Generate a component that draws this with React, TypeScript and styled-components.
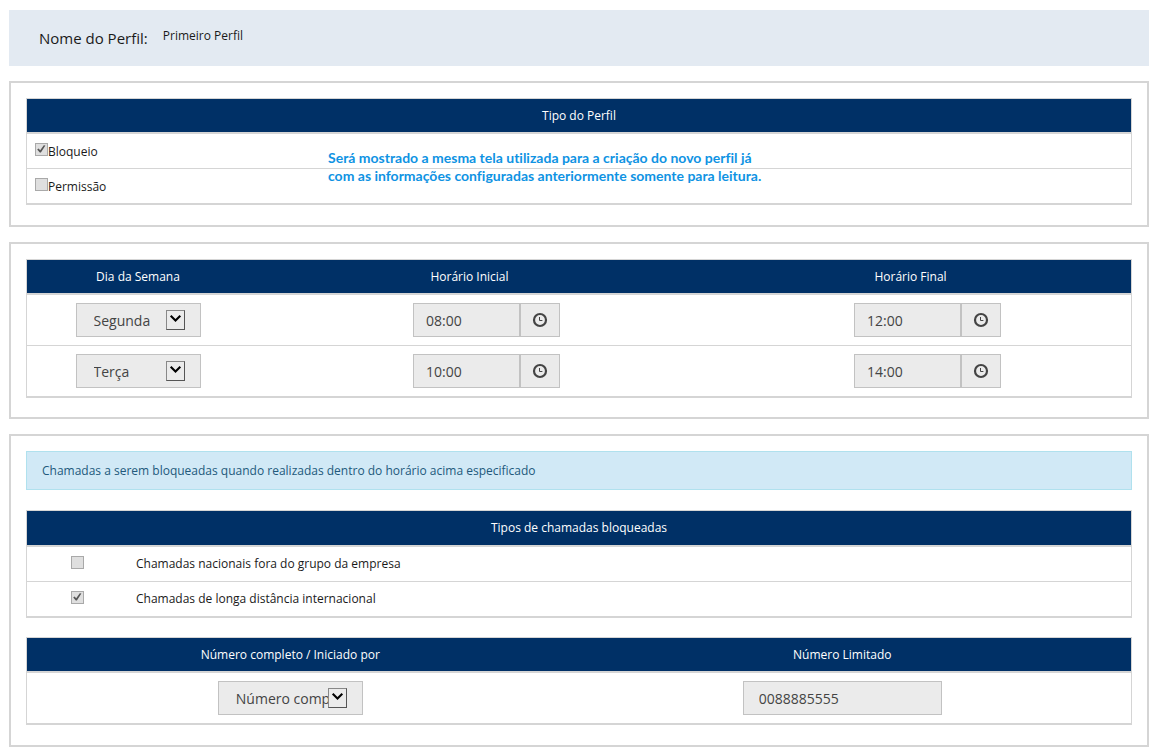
import React from "react";
import styled, { createGlobalStyle } from "styled-components";

const NAVY = "#003066";
const LINE = "#d5d5d5";

const GlobalStyle = createGlobalStyle`
  *, *::before, *::after { box-sizing: border-box; }
  body {
    margin: 0;
    background: #fff;
    color: #1a1a1a;
    font-family: "Open Sans", "Noto Sans", sans-serif;
    font-size: 12px;
    font-weight: 500;
    line-height: 18px;
  }
`;

const Page = styled.main`
  display: flex;
  flex-direction: column;
  gap: 15px;
  padding: 10px 20px 5px 9px;
`;

const ProfileBar = styled.header`
  display: flex;
  align-items: flex-start;
  gap: 15px;
  min-height: 56px;
  padding: 16px 30px;
  background: #e3eaf2;
`;

const ProfileLabel = styled.span`
  font-size: 15px;
  line-height: 24px;
`;

const ProfileName = styled.span`
  line-height: 20px;
`;

const Panel = styled.section<{ $bottom?: number }>`
  position: relative;
  padding: 15px 15px ${(p) => p.$bottom ?? 20}px;
  border: 2px solid ${LINE};
`;

const Table = styled.table`
  width: 100%;
  table-layout: fixed;
  border-collapse: separate;
  border-spacing: 0;
  border: 1px solid ${LINE};
  border-bottom-width: 2px;

  & + & {
    margin-top: 19px;
  }
`;

const Col = styled.col<{ $width?: string }>`
  width: ${(p) => p.$width ?? "auto"};
`;

const Th = styled.th<{ $height?: number }>`
  height: ${(p) => p.$height ?? 35}px;
  padding: 0 8px;
  border-bottom: 2px solid ${LINE};
  background: ${NAVY};
  color: #fff;
  font-weight: 500;
  text-align: center;
`;

const Td = styled.td<{ $center?: boolean; $shift?: boolean }>`
  padding: 8px;
  padding-left: ${(p) => (p.$shift ? "42px" : "8px")};
  text-align: ${(p) => (p.$center ? "center" : "left")};
  vertical-align: middle;

  tr + tr > & {
    border-top: 1px solid ${LINE};
  }
`;

const CheckLabel = styled.label`
  display: flex;
  align-items: flex-start;
  height: 18px;
  line-height: 20px;
`;

const CheckBox = styled.span`
  display: inline-block;
  position: relative;
  width: 13px;
  height: 13px;
  margin-top: 1px;
  vertical-align: top;

  svg {
    position: absolute;
    inset: 0;
    pointer-events: none;
  }
`;

const CheckInput = styled.input`
  display: block;
  appearance: none;
  width: 13px;
  height: 13px;
  margin: 0;
  border: 1px solid #a9a9a9;
  background: #dfdfdf;
`;

const Note = styled.p`
  position: absolute;
  top: 66px;
  left: 317px;
  margin: 0;
  color: #0f93e3;
  font-family: Lato, "Open Sans", sans-serif;
  font-size: 14px;
  font-weight: 700;
  font-variant-ligatures: none;
  line-height: 18px;
`;

const Alert = styled.div`
  margin-bottom: 20px;
  padding: 10px 15px 9px;
  border: 1px solid #b0e1ee;
  background: #d1e9f6;
  color: #22597c;
`;

const SelectWrap = styled.span<{ $width: number }>`
  display: inline-block;
  position: relative;
  width: ${(p) => p.$width}px;
  height: 34px;
  vertical-align: top;
`;

const SelectField = styled.select`
  appearance: none;
  width: 100%;
  height: 34px;
  margin: 0;
  padding: 1px 34px 0 17px;
  border: 1px solid #c2c2c2;
  border-radius: 0;
  background: #ebebeb;
  color: #444;
  font: inherit;
  font-size: 14px;
  opacity: 1;
`;

const SelectArrow = styled.span`
  position: absolute;
  top: 7px;
  right: 16px;
  display: flex;
  width: 19px;
  height: 20px;
  border: 1px solid #888;
  border-right-color: #555;
  border-bottom-color: #555;
  background: #ebebeb;
  pointer-events: none;
`;

const TextField = styled.input<{ $width: number; $inset: number }>`
  width: ${(p) => p.$width}px;
  height: 34px;
  margin: 0;
  padding: 1px ${(p) => p.$inset}px 0;
  border: 1px solid #c2c2c2;
  border-radius: 0;
  background: #ebebeb;
  color: #444;
  font: inherit;
  font-size: 14px;
  vertical-align: top;
`;

const TimeGroup = styled.span`
  display: inline-flex;
  vertical-align: top;
`;

const ClockButton = styled.button`
  display: flex;
  align-items: center;
  justify-content: center;
  width: 40px;
  height: 34px;
  padding: 0;
  border: 1px solid #c2c2c2;
  background: #ebebeb;
  color: #444;
`;

function Check({ checked, id }: { checked?: boolean; id?: string }) {
  return (
    <CheckBox>
      <CheckInput type="checkbox" id={id} checked={!!checked} disabled readOnly />
      {checked && (
        <svg width="13" height="13" viewBox="0 0 13 13" aria-hidden="true">
          <path d="M2.2 6.4 L3.6 5.4 L5.2 7.2 L8.8 2.2 L10.4 2.5 L5.9 9.6 L4.8 9.6 Z" fill="#555" />
        </svg>
      )}
    </CheckBox>
  );
}

function Select({ value, width, label }: { value: string; width: number; label: string }) {
  return (
    <SelectWrap $width={width}>
      <SelectField disabled aria-label={label} defaultValue={value}>
        <option>{value}</option>
      </SelectField>
      <SelectArrow>
        <svg width="17" height="18" viewBox="0 0 17 18" aria-hidden="true">
          <path d="M3.7 4.8 L8.5 9.5 L13.3 4.8" fill="none" stroke="#000" strokeWidth="2.1" />
        </svg>
      </SelectArrow>
    </SelectWrap>
  );
}

function TimeField({ value, label }: { value: string; label: string }) {
  return (
    <TimeGroup>
      <TextField $width={107} $inset={12} readOnly value={value} aria-label={label} />
      <ClockButton type="button" disabled aria-label={`Escolher ${label}`}>
        <svg width="16" height="16" viewBox="0 0 16 16" fill="none" stroke="currentColor" aria-hidden="true">
          <circle cx="8" cy="8" r="6" strokeWidth="2.2" />
          <path d="M7.5 5 V8.5 H10.4" strokeWidth="1" />
        </svg>
      </ClockButton>
    </TimeGroup>
  );
}

const schedule = [
  { day: "Segunda", start: "08:00", end: "12:00" },
  { day: "Terça", start: "10:00", end: "14:00" },
];

const callTypes = [
  { id: "nacional", text: "Chamadas nacionais fora do grupo da empresa", checked: false },
  { id: "internacional", text: "Chamadas de longa distância internacional", checked: true },
];

export default function App() {
  return (
    <>
      <GlobalStyle />
      <Page>
        <ProfileBar>
          <ProfileLabel>Nome do Perfil:</ProfileLabel>
          <ProfileName>Primeiro Perfil</ProfileName>
        </ProfileBar>

        <Panel>
          <Table>
            <thead>
              <tr><Th>Tipo do Perfil</Th></tr>
            </thead>
            <tbody>
              <tr><Td><CheckLabel><Check checked />Bloqueio</CheckLabel></Td></tr>
              <tr><Td><CheckLabel><Check />Permissão</CheckLabel></Td></tr>
            </tbody>
          </Table>
          <Note>
            Será mostrado a mesma tela utilizada para a criação do novo perfil já
            <br />
            com as informações configuradas anteriormente somente para leitura.
          </Note>
        </Panel>

        <Panel $bottom={19}>
          <Table>
            <colgroup>
              <Col $width="222px" />
              <Col />
              <Col />
            </colgroup>
            <thead>
              <tr>
                <Th>Dia da Semana</Th>
                <Th>Horário Inicial</Th>
                <Th>Horário Final</Th>
              </tr>
            </thead>
            <tbody>
              {schedule.map((row) => (
                <tr key={row.day}>
                  <Td $center><Select value={row.day} width={125} label="Dia da Semana" /></Td>
                  <Td $center $shift><TimeField value={row.start} label="Horário Inicial" /></Td>
                  <Td $center $shift><TimeField value={row.end} label="Horário Final" /></Td>
                </tr>
              ))}
            </tbody>
          </Table>
        </Panel>

        <Panel>
          <Alert>Chamadas a serem bloqueadas quando realizadas dentro do horário acima especificado</Alert>
          <Table>
            <colgroup>
              <Col $width="101px" />
              <Col />
            </colgroup>
            <thead>
              <tr><Th $height={36} colSpan={2}>Tipos de chamadas bloqueadas</Th></tr>
            </thead>
            <tbody>
              {callTypes.map((c) => (
                <tr key={c.id}>
                  <Td $center><Check id={c.id} checked={c.checked} /></Td>
                  <Td><label htmlFor={c.id}>{c.text}</label></Td>
                </tr>
              ))}
            </tbody>
          </Table>
          <Table>
            <colgroup>
              <Col $width="47.7%" />
              <Col />
            </colgroup>
            <thead>
              <tr>
                <Th>Número completo / Iniciado por</Th>
                <Th>Número Limitado</Th>
              </tr>
            </thead>
            <tbody>
              <tr>
                <Td $center><Select value="Número completo" width={145} label="Número completo / Iniciado por" /></Td>
                <Td $center><TextField $width={199} $inset={15} readOnly value="0088885555" aria-label="Número Limitado" /></Td>
              </tr>
            </tbody>
          </Table>
        </Panel>
      </Page>
    </>
  );
}
